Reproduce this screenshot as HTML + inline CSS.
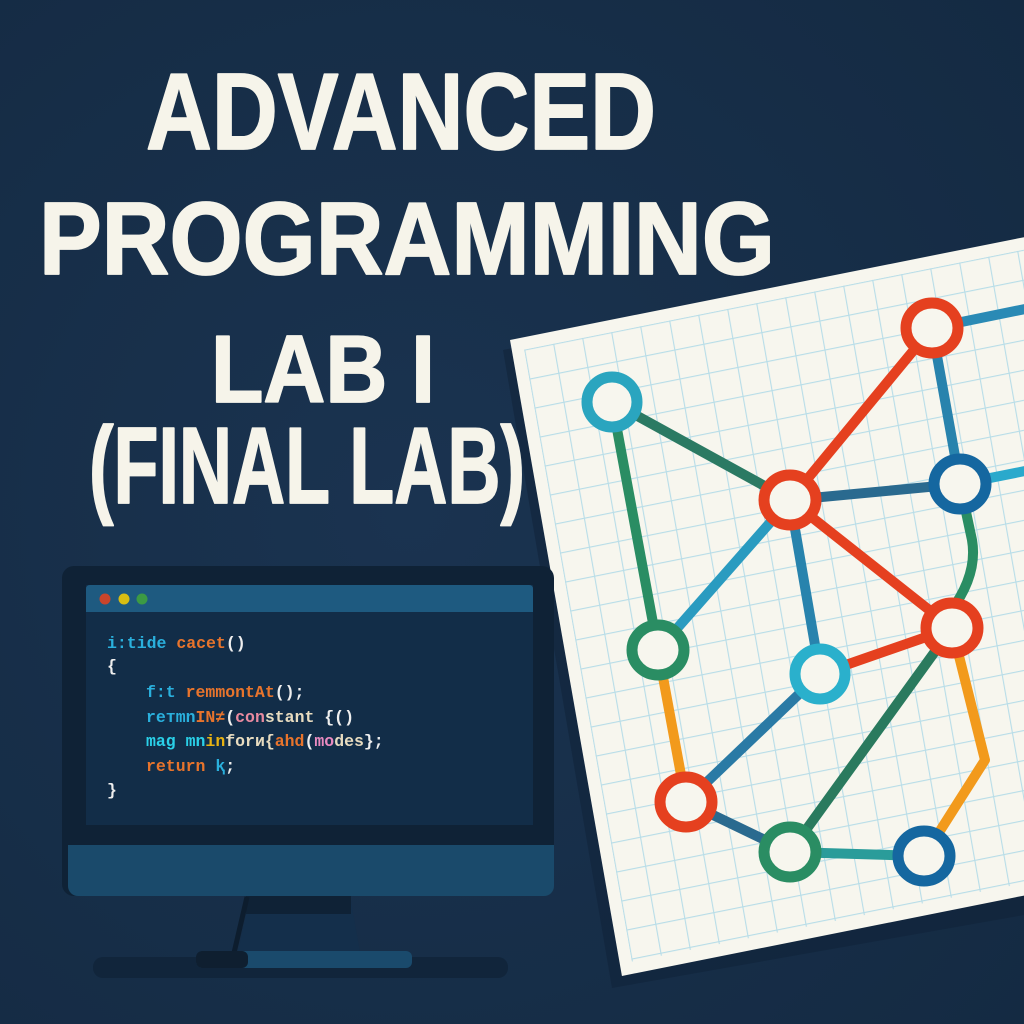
<!DOCTYPE html>
<html><head><meta charset="utf-8"><style>
html,body{margin:0;padding:0;width:1024px;height:1024px;overflow:hidden;background:#172e47}
svg{display:block}
.t{font-family:"Liberation Sans",sans-serif;font-weight:bold;fill:#f6f4ea;stroke:#f6f4ea;stroke-width:1.8;stroke-linejoin:round}
.c{font-family:"Liberation Mono","DejaVu Sans Mono",monospace;font-size:16.5px;font-weight:bold}
</style></head><body>
<svg width="1024" height="1024" viewBox="0 0 1024 1024">
<defs>
<pattern id="g" x="12" y="12" width="29" height="29" patternUnits="userSpaceOnUse">
<path d="M0 0H29M0 0V29" stroke="#b8dde8" stroke-width="2.2" fill="none"/>
</pattern>
<radialGradient id="bg" cx="0.4" cy="0.5" r="0.8"><stop offset="0" stop-color="#1a3350"/><stop offset="1" stop-color="#142a42"/></radialGradient>
</defs>
<rect width="1024" height="1024" fill="url(#bg)"/>
<!-- title -->
<text class="t" x="146" y="149" font-size="109" textLength="510" lengthAdjust="spacingAndGlyphs">ADVANCED</text>
<text class="t" x="39" y="274" font-size="103" textLength="736" lengthAdjust="spacingAndGlyphs">PROGRAMMING</text>
<text class="t" x="211" y="402" font-size="96" textLength="224" lengthAdjust="spacingAndGlyphs">LAB I</text>
<text class="t" x="89" y="503" font-size="109" textLength="436" lengthAdjust="spacingAndGlyphs">(FINAL LAB)</text>
<!-- paper shadow -->
<polygon points="503,350 1024,245 1024,915 612,988" fill="#102239" opacity="0.55"/>
<g transform="matrix(1,-0.2,0.176,1,510,340)">
<rect x="0" y="0" width="640" height="636" fill="#f7f6ee"/>
<rect x="12" y="12" width="640" height="612" fill="url(#g)"/>
</g>
<!-- edges -->
<g fill="none" stroke-width="10" stroke-linecap="round" stroke-linejoin="round">
<path d="M612 402L658 650" stroke="#2a8d63"/>
<path d="M612 402L790 500" stroke="#2b7a63"/>
<path d="M790 500L932 328" stroke="#e5401f"/>
<path d="M932 328L960 484" stroke="#2883ad"/>
<path d="M932 328L1030 308" stroke="#2a8ab5"/>
<path d="M790 500L960 484" stroke="#2a6a8f"/>
<path d="M960 484L1030 470" stroke="#2aa9cc"/>
<path d="M960 484L972 540Q978 575 950 612" stroke="#2a8d63"/>
<path d="M790 500L658 650" stroke="#2a9bc0"/>
<path d="M790 500L820 674" stroke="#2883ad"/>
<path d="M790 500L952 628" stroke="#e5401f"/>
<path d="M952 628L820 674" stroke="#e5401f"/>
<path d="M952 628L790 852" stroke="#2a7a5e"/>
<path d="M952 628L985 760L924 856" stroke="#f29a1c"/>
<path d="M658 650L686 802" stroke="#f29a1c"/>
<path d="M820 674L686 802" stroke="#2a7aa5"/>
<path d="M686 802L790 852" stroke="#2a6a8f"/>
<path d="M790 852L924 856" stroke="#2a9c9a"/>
</g>
<!-- nodes -->
<g fill="#f7f6ee" stroke-width="11">
<ellipse cx="612" cy="402" rx="25" ry="25" stroke="#2aa5bf"/>
<ellipse cx="932" cy="328" rx="26" ry="25" stroke="#e5401f"/>
<ellipse cx="790" cy="500" rx="26" ry="25" stroke="#e5401f"/>
<ellipse cx="960" cy="484" rx="26" ry="25" stroke="#1567a0"/>
<ellipse cx="658" cy="650" rx="26" ry="25" stroke="#2a8d63"/>
<ellipse cx="952" cy="628" rx="26" ry="25" stroke="#e5401f"/>
<ellipse cx="820" cy="674" rx="25" ry="25" stroke="#2ab0cc"/>
<ellipse cx="686" cy="802" rx="26" ry="25" stroke="#e5401f"/>
<ellipse cx="790" cy="852" rx="26" ry="25" stroke="#2a8d63"/>
<ellipse cx="924" cy="856" rx="26" ry="25" stroke="#1567a0"/>
</g>
<!-- monitor stand -->
<rect x="93" y="957" width="415" height="21" rx="10" fill="#11253b"/>
<polygon points="250,896 350,896 360,952 238,952" fill="#142f4b"/>
<rect x="246" y="896" width="105" height="18" fill="#0f2236"/>
<line x1="247" y1="897" x2="234" y2="953" stroke="#0d1d2e" stroke-width="5"/>
<rect x="196" y="951" width="216" height="17" rx="6" fill="#1a4a6c"/>
<rect x="196" y="951" width="52" height="17" rx="6" fill="#0f1f30"/>
<!-- monitor -->
<rect x="62" y="566" width="492" height="330" rx="12" fill="#0f2236"/>
<rect x="68" y="845" width="486" height="51" rx="10" fill="#1a4a6b"/>
<rect x="68" y="845" width="486" height="20" fill="#1a4a6b"/>
<rect x="86" y="585" width="447" height="240" fill="#122d48"/>
<path d="M86 612V589Q86 585 90 585H529Q533 585 533 589V612Z" fill="#1e5a80"/>
<circle cx="105" cy="599" r="5.5" fill="#c9452c"/>
<circle cx="124" cy="599" r="5.5" fill="#d8bd12"/>
<circle cx="142" cy="599" r="5.5" fill="#3c9a44"/>
<g class="c">
<text x="107" y="648"><tspan fill="#2ab0dd">i:tide </tspan><tspan fill="#e8742c">cacet</tspan><tspan fill="#eeeeee">()</tspan></text>
<text x="107" y="671" fill="#eeeeee">{</text>
<text x="146" y="697"><tspan fill="#2ab0dd">f:t </tspan><tspan fill="#e8742c">remmontAt</tspan><tspan fill="#eeeeee">();</tspan></text>
<text x="146" y="722"><tspan fill="#2ab0dd">reтmn</tspan><tspan fill="#e8742c">IN≠</tspan><tspan fill="#eeeeee">(</tspan><tspan fill="#e98aa0">con</tspan><tspan fill="#e8dcc0">stant </tspan><tspan fill="#eeeeee">{()</tspan></text>
<text x="146" y="746"><tspan fill="#2ad0e8">mag mn</tspan><tspan fill="#e8b212">in</tspan><tspan fill="#e8dcc0">forи{</tspan><tspan fill="#e8742c">ahd</tspan><tspan fill="#eeeeee">(</tspan><tspan fill="#e98ac0">mo</tspan><tspan fill="#e8dcc0">des</tspan><tspan fill="#eeeeee">};</tspan></text>
<text x="146" y="771"><tspan fill="#e8742c">return </tspan><tspan fill="#2ab0dd">ⱪ</tspan><tspan fill="#eeeeee">;</tspan></text>
<text x="107" y="795" fill="#eeeeee">}</text>
</g>
</svg>
</body></html>
